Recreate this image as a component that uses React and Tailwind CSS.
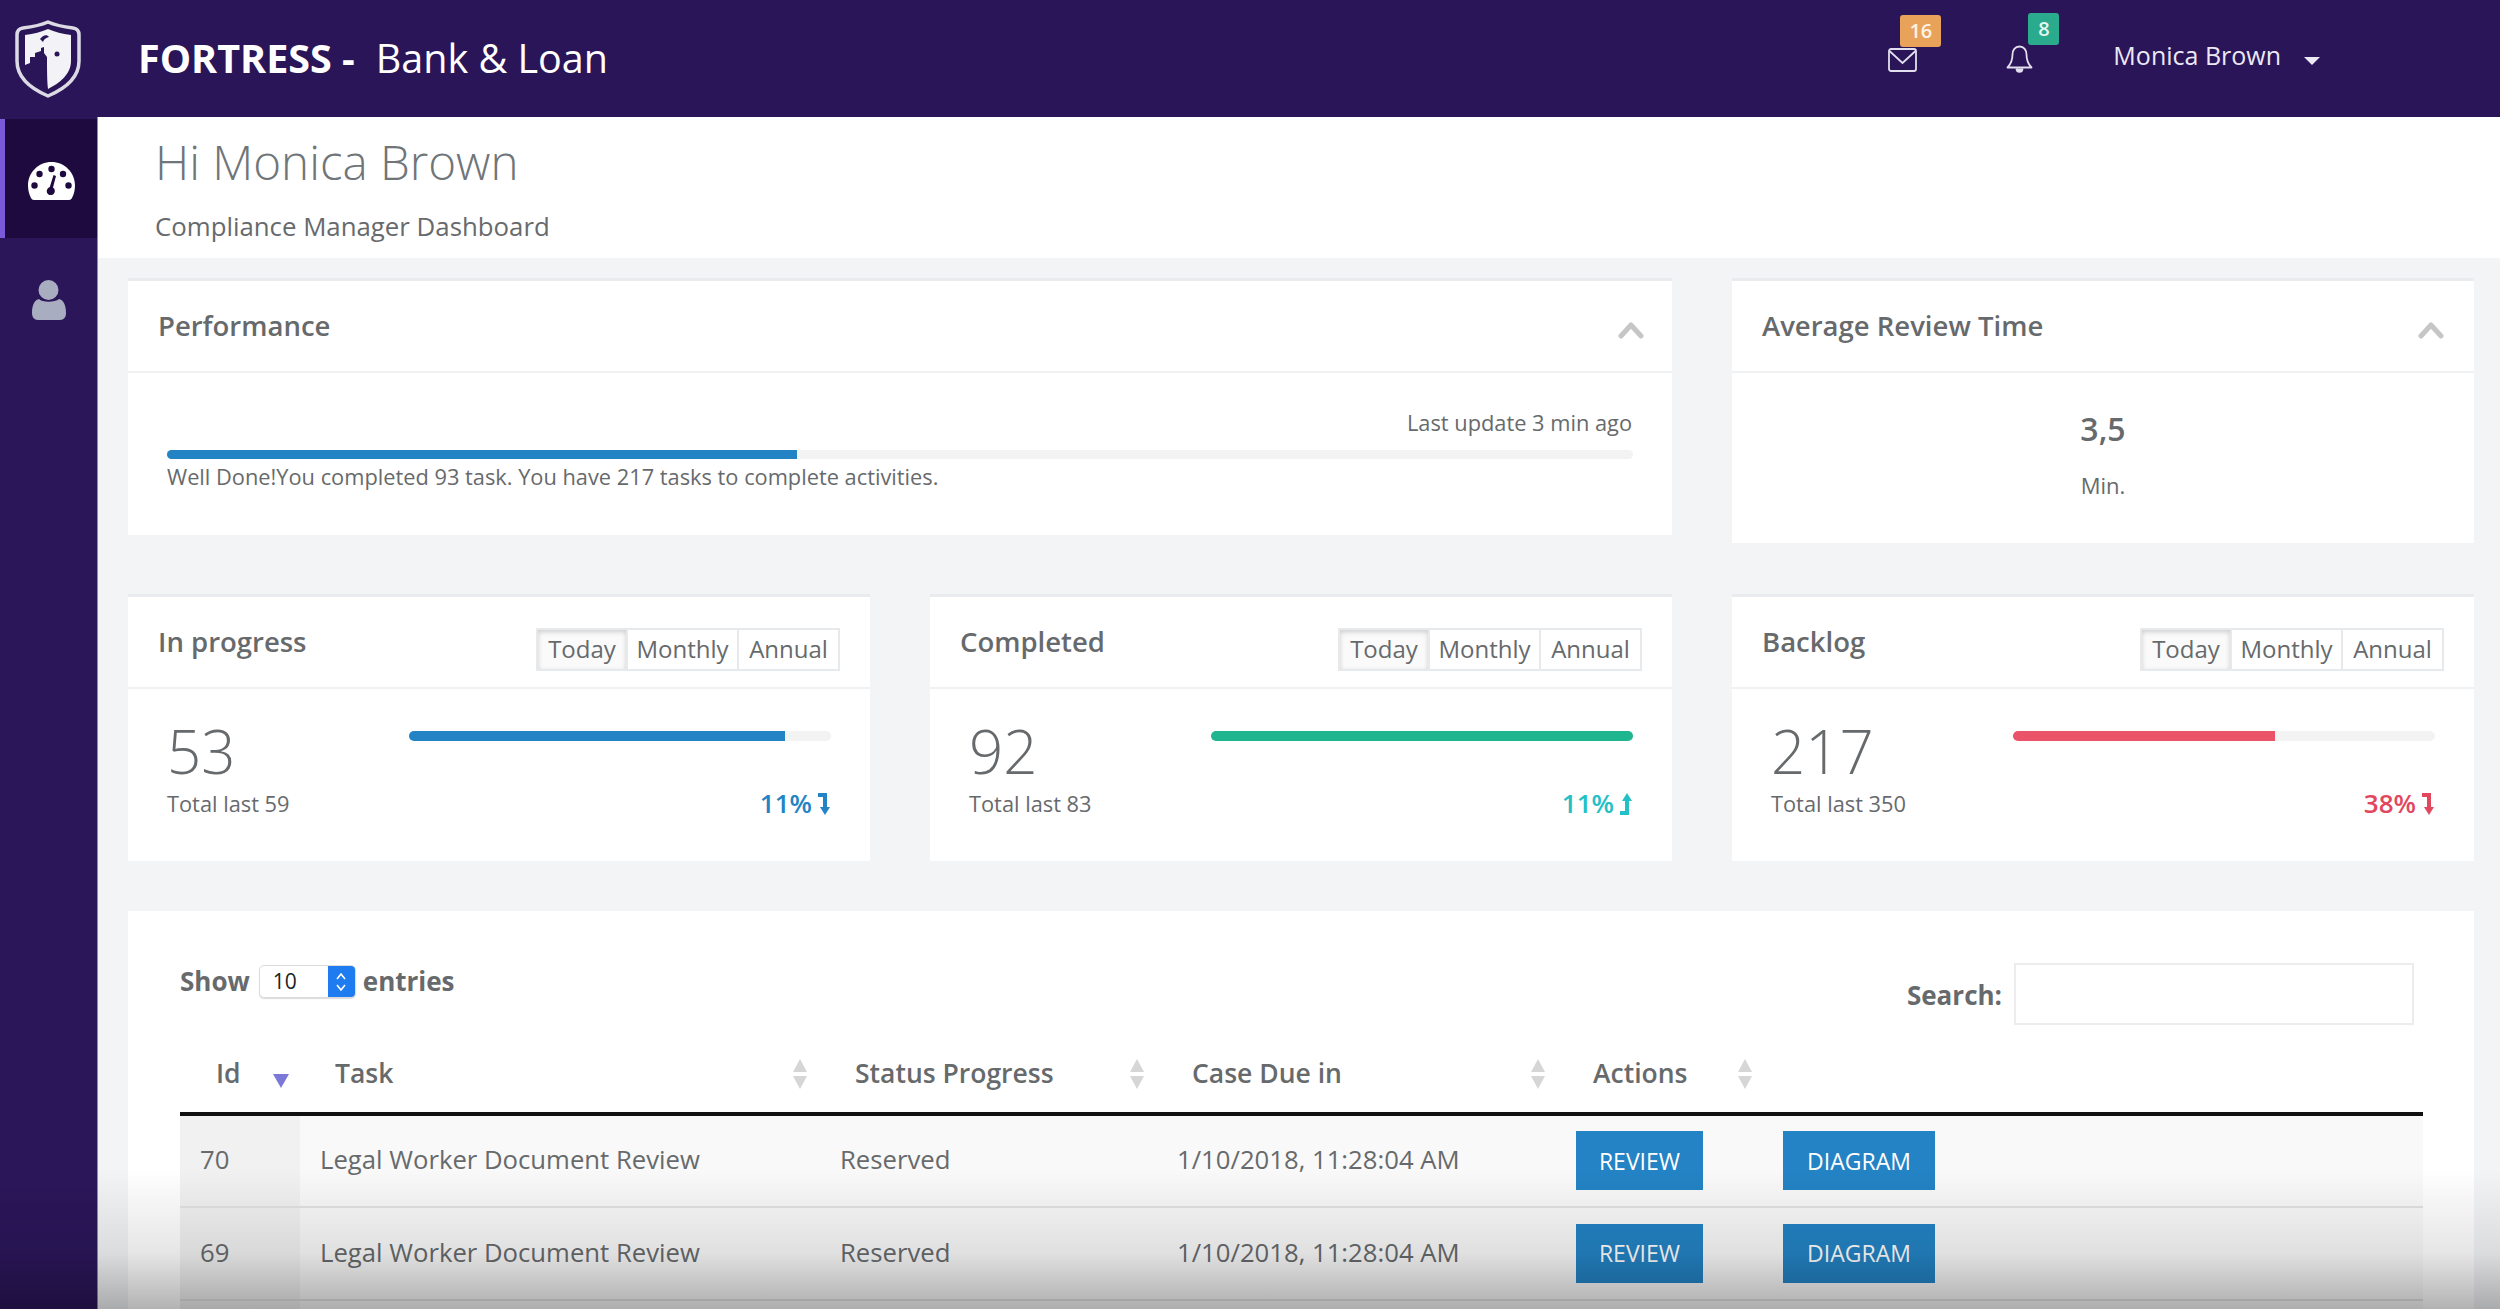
import { useState } from 'react';

const statCards = [
  { title: 'In progress', value: '53', total: 'Total last 59', pct: '11%', fill: 89, bar: 'bg-[#2383c4]', text: 'text-[#2383c4]', up: false },
  { title: 'Completed', value: '92', total: 'Total last 83', pct: '11%', fill: 100, bar: 'bg-[#1fb58f]', text: 'text-[#23c0c6]', up: true },
  { title: 'Backlog', value: '217', total: 'Total last 350', pct: '38%', fill: 62, bar: 'bg-[#ea5368]', text: 'text-[#e2475e]', up: false },
];

const rows = [70, 69];

function ShieldLogo() {
  return (
    <svg width="68" height="80" viewBox="0 0 68 80" className="shrink-0">
      <path d="M34 3C25 7 17 8 9 9C5 9.500 3 12 3 16V42C3 60 20 71 34 77C48 71 65 60 65 42V16C65 12 63 9.500 59 9C51 8 43 7 34 3Z" fill="none" stroke="#dcdae4" strokeWidth="3.500" strokeLinejoin="round" />
      <path d="M11 16C20 15 27 13 34 10C41 13 48 15 57 16V42C57 55 46 64 34 70C33 62 33 48 33 38L30 34V28L27 29V32L21 34V38H16V44L11 46Z" fill="#f3f2f6" />
      <path d="M26 20C29 16 33 15 35 18C32 19 30 20 29 23C28 22 27 21 26 20Z" fill="#2a1558" />
      <circle cx="43" cy="35" r="2.500" fill="#2a1558" />
    </svg>
  );
}

function GaugeIcon() {
  return (
    <svg width="47" height="38" viewBox="0 0 47 38">
      <path d="M23.500 0C10.500 0 0 10.500 0 23.500C0 28 1 32 3 36C3.600 37.300 4.600 38 6 38H41C42.400 38 43.400 37.300 44 36C46 32 47 28 47 23.500C47 10.500 36.500 0 23.500 0Z" fill="#fff" />
      <g fill="#1f0a3f">
        <circle cx="23.500" cy="7" r="3.200" />
        <circle cx="11.500" cy="12" r="3.200" />
        <circle cx="35" cy="12" r="3.200" />
        <circle cx="6.500" cy="23.500" r="3.200" />
        <circle cx="40.500" cy="23.500" r="3.200" />
        <path d="M25.500 13L28 14L25 25.500C27 26.800 27.500 29.500 26 31.500C24.300 33.500 21 33.500 19.500 31.500C18 29.300 19 26 21.800 25Z" />
      </g>
    </svg>
  );
}

function PersonIcon() {
  return (
    <svg width="34" height="40" viewBox="0 0 34 40" fill="#a9adc0">
      <circle cx="16.500" cy="10" r="10" />
      <path d="M7 19C10 22.500 23 22.500 27 19C31 20 34 24 34 33C34 37 32 40 28 40H6C2 40 0 37 0 33C0 24 3 20 7 19Z" />
    </svg>
  );
}

function MailIcon() {
  return (
    <svg width="29" height="24" viewBox="0 0 29 24" fill="none" stroke="#e2dfee" strokeWidth="1.800">
      <rect x="1" y="1" width="27" height="22" rx="2" />
      <path d="M1.500 3L14.500 15L27.500 3" />
    </svg>
  );
}

function BellIcon() {
  return (
    <svg width="27" height="28" viewBox="0 0 27 28" fill="none" stroke="#e2dfee" strokeWidth="1.800" strokeLinejoin="round">
      <path d="M13.500 1.500C9 1.500 6.500 5 6.500 9.500C6.500 15 5 19 1.500 22.500H25.500C22 19 20.500 15 20.500 9.500C20.500 5 18 1.500 13.500 1.500Z" />
      <path d="M10.500 23.500C10.500 28 16.500 28 16.500 23.500" fill="#e2dfee" />
    </svg>
  );
}

function ChevronUp() {
  return (
    <svg width="26" height="18" viewBox="0 0 26 18" fill="none" stroke="#c6c6c6" strokeWidth="5" strokeLinecap="round" strokeLinejoin="round" className="mt-[8px] shrink-0">
      <path d="M3 15L13 4L23 15" />
    </svg>
  );
}

// font-awesome style level-up / level-down arrow
function LevelArrow({ up }) {
  return (
    <svg width="12" height="22" viewBox="0 0 12 22" fill="currentColor" className={up ? 'shrink-0 -scale-y-100' : 'shrink-0'}>
      <path d="M0 0H9V14H12L7 22L2 14H5V4H0Z" />
    </svg>
  );
}

function SortIcon() {
  return (
    <svg width="16" height="30" viewBox="0 0 16 30" fill="#d6d6d6" className="shrink-0">
      <path d="M8 0L15 13H1Z" />
      <path d="M8 30L1 17H15Z" />
    </svg>
  );
}

function CardHeader({ title, children, padding }) {
  return (
    <div className={`flex h-[92px] items-center justify-between border-b-2 border-[#eff1f3] pl-[30px] ${padding}`}>
      <h2 className="text-[27.5px] font-semibold text-[#676a6c]">{title}</h2>
      {children}
    </div>
  );
}

function StatCard({ card }) {
  const [range, setRange] = useState('Today');
  return (
    <section className="h-[267px] border-t-[3px] border-[#e9ebef] bg-white">
      <div className="flex h-[92px] items-center justify-between border-b-2 border-[#eff1f3] pl-[30px] pr-[30px]">
        <h2 className="-mt-[1px] text-[27.5px] font-semibold text-[#676a6c]">{card.title}</h2>
        <div className="mt-[14px] flex h-[43px] border-2 border-[#e7eaec] text-[24px] text-[#676a6c]">
          {['Today', 'Monthly', 'Annual'].map((label) => (
            <button
              key={label}
              onClick={() => setRange(label)}
              className={`flex items-center justify-center border-r-2 border-[#e7eaec] last:border-r-0 ${
                label === 'Today' ? 'w-[90px]' : label === 'Monthly' ? 'w-[111px]' : 'w-[99px]'
              } ${range === label ? 'bg-[#fafafa] shadow-[inset_0_2px_5px_rgba(0,0,0,0.18)]' : ''}`}
            >
              {label}
            </button>
          ))}
        </div>
      </div>
      <div className="flex pl-[39px] pr-[39px] pt-[24px]">
        <div className="w-[242px] shrink-0">
          <div className="mt-[1px] text-[60px] font-light leading-[74px] text-[#676a6c]">{card.value}</div>
          <div className="text-[21.8px] text-[#676a6c]">{card.total}</div>
        </div>
        <div className="flex-1 pt-[18px]">
          <div className="h-[10px] rounded-full bg-[#f3f3f4]">
            <div className={`h-full rounded-l-full ${card.fill === 100 ? 'rounded-r-full' : ''} ${card.bar}`} style={{ width: `${card.fill}%` }} />
          </div>
          <div className={`mt-[43px] flex items-center justify-end gap-[6px] pr-[1px] text-[26px] font-semibold ${card.text}`}>
            {card.pct}
            <LevelArrow up={card.up} />
          </div>
        </div>
      </div>
    </section>
  );
}

function HeaderCell({ label, width = '', inset = 'pl-[30px]' }) {
  return (
    <th className={`p-0 pb-[18px] text-left align-bottom ${width}`}>
      <div className={`flex items-center justify-between pr-[17px] text-[26.5px] font-semibold text-[#676a6c] ${inset}`}>
        {label}
        <SortIcon />
      </div>
    </th>
  );
}

function ActionButton({ children, className }) {
  return (
    <button className={`h-[59px] bg-[#2383c4] text-[23px] text-white ${className}`}>{children}</button>
  );
}

function App() {
  return (
    <div className="relative flex h-screen flex-col overflow-hidden bg-[#f3f4f6] font-['Open_Sans',sans-serif]">
      {/* Top bar */}
      <header className="flex h-[117px] shrink-0 items-center bg-[#2a1558] text-white">
        <div className="ml-[14px] mt-[1px] flex">
          <ShieldLogo />
        </div>
        <div className="ml-[56px] flex items-baseline text-[39.5px]">
          <span className="font-bold">FORTRESS -</span>
          <span className="ml-[21px]">Bank &amp; Loan</span>
        </div>
        <div className="ml-auto flex items-center pr-[180px] pt-[1px]">
          <div className="relative mt-[2px]">
            <MailIcon />
            <span className="absolute left-[12px] top-[-33px] flex h-[32px] w-[41px] items-center justify-center rounded-[3px] bg-[#e8a25a] text-[20px] font-semibold text-[#fdf3e6]">16</span>
          </div>
          <div className="relative ml-[89px]">
            <BellIcon />
            <span className="absolute left-[22px] top-[-32px] flex h-[32px] w-[31px] items-center justify-center rounded-[3px] bg-[#2bab8e] text-[20px] font-semibold text-[#e6f7f2]">8</span>
          </div>
          <span className="-mt-[6px] ml-[80px] text-[25px] text-[#ece9f4]">Monica Brown</span>
          <span className="ml-[23px] mt-[4px] h-0 w-0 border-x-[8px] border-t-[8px] border-x-transparent border-t-[#ece9f4]" />
        </div>
      </header>

      <div className="flex min-h-0 flex-1">
        {/* Sidebar */}
        <nav className="flex w-[98px] shrink-0 flex-col border-r border-[#8f8aa8] bg-[#2b165a] pt-[2px]">
          <div className="flex h-[119px] items-center justify-center border-l-[5px] border-[#7a5ad8] bg-[#1f0a3f] pt-[4px]">
            <GaugeIcon />
          </div>
          <div className="flex h-[117px] items-center justify-center pl-[1px] pt-[6px]">
            <PersonIcon />
          </div>
        </nav>

        {/* Main */}
        <main className="min-w-0 flex-1">
          <div className="h-[141px] bg-white pl-[57px] pt-[13px]">
            <h1 className="text-[47.5px] font-light leading-[64px] text-[#6f7579]">Hi Monica Brown</h1>
            <p className="mt-[15px] text-[25.8px] leading-[34px] text-[#676a6c]">Compliance Manager Dashboard</p>
          </div>

          <div className="pl-[30px] pr-[26px] pt-[20px]">
            <div className="grid grid-cols-3 items-start gap-x-[60px]">
              <section className="col-span-2 h-[257px] border-t-[3px] border-[#e9ebef] bg-white">
                <CardHeader title="Performance" padding="pr-[28px]">
                  <ChevronUp />
                </CardHeader>
                <div className="pl-[39px] pr-[39px] pt-[35px]">
                  <p className="pr-[1px] text-right text-[21.8px] leading-[30px] text-[#676a6c]">Last update 3 min ago</p>
                  <div className="mt-[12px] h-[9px] rounded-full bg-[#f3f3f4]">
                    <div className="h-full w-[43%] rounded-l-full bg-[#2383c4]" />
                  </div>
                  <p className="mt-[3px] text-[21.8px] leading-[30px] text-[#676a6c]">Well Done!You completed 93 task. You have 217 tasks to complete activities.</p>
                </div>
              </section>

              <section className="h-[265px] border-t-[3px] border-[#e9ebef] bg-white">
                <CardHeader title="Average Review Time" padding="pr-[30px]">
                  <ChevronUp />
                </CardHeader>
                <div className="pt-[34px] text-center text-[#676a6c]">
                  <div className="text-[32px] font-semibold leading-[44px]">3,5</div>
                  <div className="mt-[19px] text-[22px] leading-[30px]">Min.</div>
                </div>
              </section>
            </div>

            <div className="mt-[51px] grid grid-cols-3 gap-x-[60px]">
              {statCards.map((card) => (
                <StatCard key={card.title} card={card} />
              ))}
            </div>

            {/* Tasks table */}
            <section className="mt-[50px] bg-white pl-[52px] pr-[51px] pt-[52px]">
              <div className="flex items-start justify-between pr-[9px]">
                <div className="-mt-[1px] flex items-center text-[26px] font-bold text-[#676a6c]">
                  Show
                  <div className="ml-[9px] mr-[7px] flex h-[33px] w-[97px] items-stretch overflow-hidden rounded-[5px] border border-[#dcdcdc] bg-white shadow-[0_1px_1px_rgba(0,0,0,0.15)]">
                    <span className="flex-1 pl-[13px] text-[21px] font-normal leading-[31px] text-[#222]">10</span>
                    <span className="flex w-[27px] items-center justify-center bg-[#1f7cf0]">
                      <svg width="12" height="22" viewBox="0 0 12 22" fill="none" stroke="#fff" strokeWidth="1.600">
                        <path d="M2 8L6 3L10 8" />
                        <path d="M2 14L6 19L10 14" />
                      </svg>
                    </span>
                  </div>
                  entries
                </div>
                <div className="flex items-center gap-[12px] text-[26px] font-bold text-[#676a6c]">
                  <span className="mt-[2px]">Search:</span>
                  <input aria-label="Search" className="h-[62px] w-[400px] border-2 border-[#ececec] bg-white" />
                </div>
              </div>

              <table className="mt-[29px] w-full table-fixed">
                <thead>
                  <tr className="border-b-4 border-[#111]">
                    <th className="w-[120px] p-0 pb-[18px] text-left align-bottom">
                      <div className="flex items-center justify-between pl-[36px] pr-[11px] text-[26.5px] font-semibold text-[#676a6c]">
                        Id
                        <svg width="16" height="14" viewBox="0 0 16 14" fill="#7b78d8" className="mt-[14px] shrink-0">
                          <path d="M8 14L0 0H16Z" />
                        </svg>
                      </div>
                    </th>
                    <HeaderCell label="Task" width="w-[525px]" inset="pl-[35px]" />
                    <HeaderCell label="Status Progress" width="w-[337px]" />
                    <HeaderCell label="Case Due in" width="w-[401px]" />
                    <HeaderCell label="Actions" width="w-[207px]" />
                    <th className="p-0" />
                  </tr>
                </thead>
                <tbody>
                  {rows.map((id) => (
                    <tr key={id} className="h-[93px] border-b-2 border-[#e2e2e2] bg-[#f9f9f9] text-[25.7px] text-[#676a6c]">
                      <td className="bg-[#f1f1f1] pl-[20px]">{id}</td>
                      <td className="pl-[20px]">Legal Worker Document Review</td>
                      <td className="pl-[15px]">Reserved</td>
                      <td className="pl-[15px]">1/10/2018, 11:28:04 AM</td>
                      <td className="pl-[13px]">
                        <ActionButton className="w-[127px]">REVIEW</ActionButton>
                      </td>
                      <td className="pl-[13px]">
                        <ActionButton className="w-[152px]">DIAGRAM</ActionButton>
                      </td>
                    </tr>
                  ))}
                  {/* next row only peeks in at the bottom edge */}
                  <tr className="h-[93px] bg-[#f9f9f9]">
                    <td className="bg-[#f1f1f1]" />
                    <td colSpan={5} />
                  </tr>
                </tbody>
              </table>
            </section>
          </div>
        </main>
      </div>

      {/* Video player shade along the bottom edge */}
      <div className="pointer-events-none absolute inset-x-0 bottom-0 h-[140px] bg-linear-to-b from-transparent via-black/10 via-60% to-black/30" />
    </div>
  );
}

export default App;
